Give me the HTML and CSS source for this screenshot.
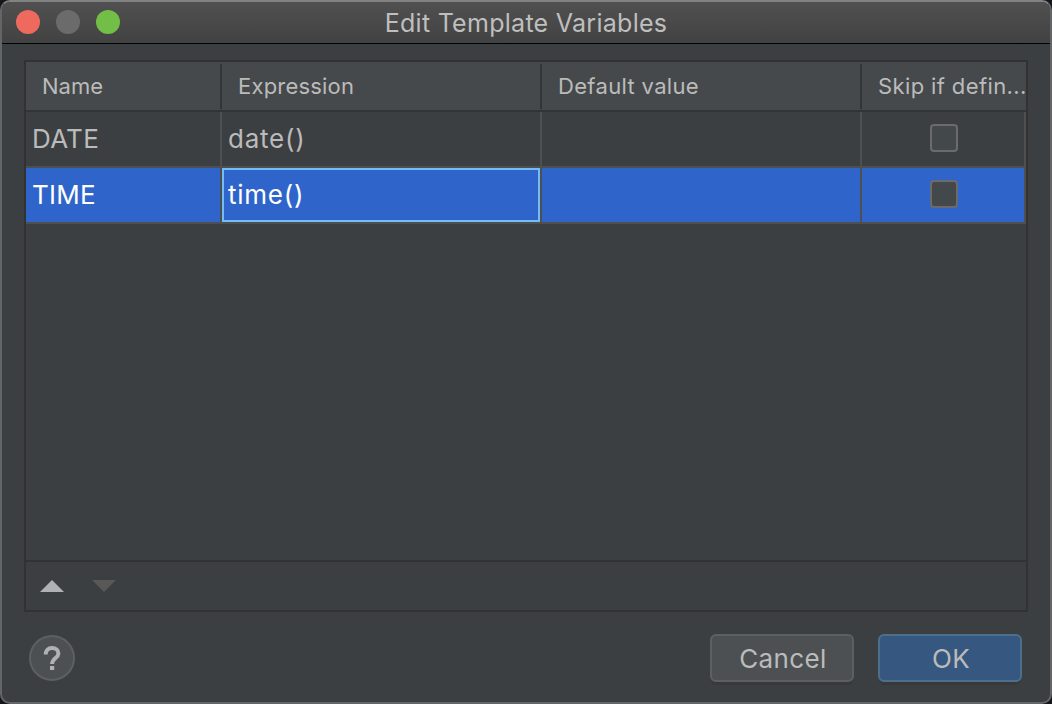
FILE: index.html
```html
<!DOCTYPE html>
<html lang="en">
<head>
<meta charset="utf-8">
<title>Edit Template Variables</title>
<link rel="stylesheet" href="styles.css">
</head>
<body>
<main class="dialog">
  <header class="titlebar">
    <div class="lights">
      <span class="light close"></span>
      <span class="light minimize"></span>
      <span class="light zoom"></span>
    </div>
    <h1 class="title">Edit Template Variables</h1>
  </header>
  <section class="panel">
    <div class="grid head">
      <div class="th"><span class="t-name">Name</span></div>
      <div class="th"><span class="t-expr">Expression</span></div>
      <div class="th"><span class="t-default">Default value</span></div>
      <div class="th"><span class="t-skip">Skip if defin...</span></div>
    </div>
    <div class="grid row">
      <div class="td"><span class="t-var">DATE</span></div>
      <div class="td"><span class="t-fn">date()</span></div>
      <div class="td"></div>
      <div class="td check"><span class="box"></span></div>
    </div>
    <div class="grid row selected">
      <div class="td"><span class="t-var">TIME</span></div>
      <div class="td focused"><span class="t-fn">time()</span></div>
      <div class="td"></div>
      <div class="td check"><span class="box"></span></div>
    </div>
    <div class="empty"></div>
    <div class="toolbar">
      <svg class="arrow up" width="24" height="12" viewBox="0 0 24 12"><path d="M0 12L12 0L24 12Z"/></svg>
      <svg class="arrow down" width="24" height="12" viewBox="0 0 24 12"><path d="M0 0H24L12 12Z"/></svg>
    </div>
  </section>
  <footer class="footer">
    <button class="help" aria-label="Help">
      <svg width="46" height="46" viewBox="0 0 46 46"><circle cx="23" cy="23" r="22" class="ring"/><path class="hook" d="M16.7 19.5C16.7 15.2 19.3 13 23 13C26.8 13 29.4 15.2 29.4 18.4C29.4 23 23.1 23.2 23.1 29"/><rect class="dot" x="21" y="31" width="4.2" height="4"/></svg>
    </button>
    <button class="btn"><span class="t-cancel">Cancel</span></button>
    <button class="btn primary"><span class="t-ok">OK</span></button>
  </footer>
</main>
</body>
</html>
```
FILE: styles.css
```css
* { box-sizing: border-box; }
body {
  margin: 0;
  background: #15161c;
  font-family: Inter, "Liberation Sans", sans-serif;
  color: #bbbbbb;
}
.dialog {
  width: 1052px;
  height: 704px;
  display: flex;
  flex-direction: column;
  border: 2px solid #636566;
  border-top-color: #828282;
  border-radius: 10px;
  background: #3c3f41;
  overflow: hidden;
}
.titlebar {
  height: 42px;
  flex: none;
  display: grid;
  grid-template-columns: 1fr auto 1fr;
  align-items: center;
  background: linear-gradient(#505050, #424242);
  border-bottom: 1px solid #000;
}
.lights { display: flex; gap: 16px; padding: 0 0 1px 14px; }
.light { width: 24px; height: 24px; border-radius: 50%; }
.close { background: #ee6a5e; }
.minimize { background: #6b6b6b; }
.zoom { background: #72be47; }
.title { margin: 0; font-size: 25px; line-height: 40px; font-weight: 400; color: #bfbfbf; white-space: nowrap; letter-spacing: 0.28px; }
.panel {
  margin: 16px 22px 0;
  height: 552px;
  flex: none;
  display: flex;
  flex-direction: column;
  border: 2px solid #323232;
}
.grid { display: grid; grid-template-columns: 196px 320px 320px 1fr; flex: none; white-space: nowrap; }
.head { height: 50px; background: #45494b; border-bottom: 2px solid #323537; font-size: 22px; }
.th { margin: 2px 0; padding-left: 16px; line-height: 45px; border-right: 2px solid #323537; }
.th:last-child { border-right: 0; }
.t-expr { letter-spacing: 0.2px; }
.t-default { letter-spacing: 0.33px; }
.t-skip { letter-spacing: 0.38px; }
.row { height: 56px; border-bottom: 2px solid #4d4f51; font-size: 26px; }
.td { padding-left: 6px; line-height: 54px; height: 54px; border-right: 2px solid #4d4f51; }
.t-var { letter-spacing: 0.25px; }
.t-fn { letter-spacing: 0.75px; }
.selected .td { background: #2f65ca; color: #fff; }
.selected .focused { box-shadow: inset 0 0 0 2px #72bdf5; }
.check { display: flex; align-items: flex-start; justify-content: center; padding: 12px 0 0 2px; }
.box { width: 28px; height: 28px; border: 2px solid #6b6b6b; border-radius: 4px; background: #43494a; }
.empty { flex: 1; }
.toolbar { height: 50px; border-top: 2px solid #323232; display: flex; align-items: center; gap: 28px; padding: 0 0 0 14px; }
.up { fill: #afb1b3; }
.down { fill: #585858; }
.footer { display: flex; align-items: center; padding: 22px 28px 0 27px; }
button { font-family: inherit; color: inherit; padding: 0; }
.help { width: 46px; height: 46px; margin-right: auto; border: 0; background: none; }
.help svg { display: block; }
.ring { fill: #4c5052; stroke: #5e6060; stroke-width: 2; }
.hook { fill: none; stroke: #afb1b3; stroke-width: 4; }
.dot { fill: #afb1b3; }
.btn {
  width: 144px;
  height: 48px;
  font-size: 26px;
  line-height: 42px;
  letter-spacing: 0.4px;
  padding: 1px 0 0 2px;
  border: 2px solid #5e6060;
  border-radius: 6px;
  background: #4c5052;
  box-shadow: 0 4px 0 -1px #37393a;
}
.primary { margin-left: 24px; background: #365880; border-color: #4c708c; }
```
